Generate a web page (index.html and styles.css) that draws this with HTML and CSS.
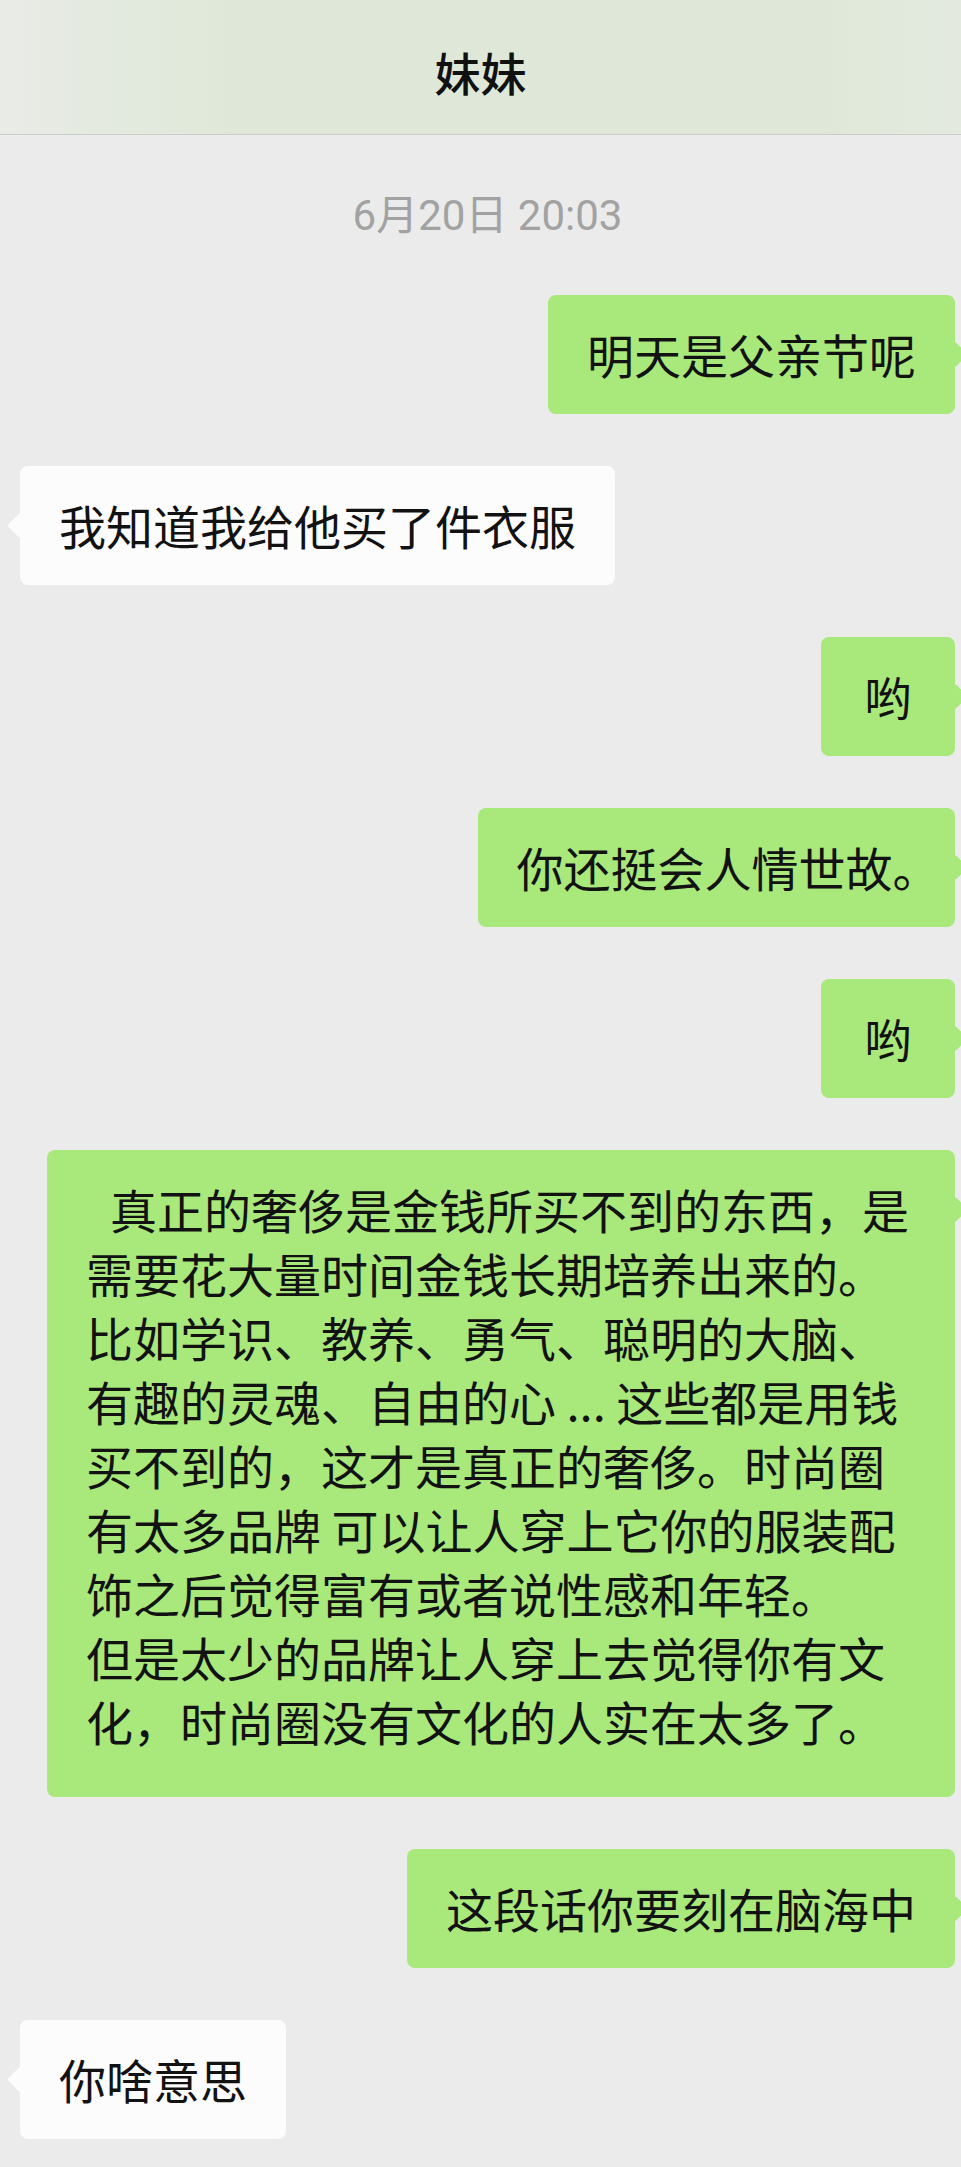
FILE: index.html
```html
<!DOCTYPE html>
<html lang="zh-CN">
<head>
    <meta charset="UTF-8">
    <meta name="viewport" content="width=device-width, initial-scale=1.0">
    <title>妹妹</title>
    <link rel="stylesheet" href="styles.css">
</head>
<body>
    <header class="topbar">
        <h1 class="title">妹妹</h1>
    </header>

    <main class="chat">
        <div class="time">6月20日 20:03</div>

        <div class="msg msg-out">
            <div class="bubble">明天是父亲节呢</div>
        </div>
        <div class="msg msg-in">
            <div class="bubble">我知道我给他买了件衣服</div>
        </div>
        <div class="msg msg-out">
            <div class="bubble">哟</div>
        </div>
        <div class="msg msg-out">
            <div class="bubble">你还挺会人情世故<span class="trim">。</span></div>
        </div>
        <div class="msg msg-out">
            <div class="bubble">哟</div>
        </div>
        <div class="msg msg-out">
            <div class="bubble long">真正的奢侈是金钱所买不到的东西，是<br>需要花大量时间金钱长期培养出来的。<br>比如学识、教养、勇气、聪明的大脑、<br>有趣的灵魂、自由的心 ... 这些都是用钱<br>买不到的，这才是真正的奢侈。时尚圈<br>有太多品牌 可以让人穿上它你的服装配<br>饰之后觉得富有或者说性感和年轻。<br>但是太少的品牌让人穿上去觉得你有文<br>化，时尚圈没有文化的人实在太多了。</div>
        </div>
        <div class="msg msg-out">
            <div class="bubble">这段话你要刻在脑海中</div>
        </div>
        <div class="msg msg-in">
            <div class="bubble">你啥意思</div>
        </div>
    </main>
</body>
</html>
```

FILE: styles.css
```css
html {
    background-color: #ebebeb;
}
body {
    margin: 0;
    overflow-x: hidden;
    font-family: "Noto Sans CJK SC", "Noto Sans", sans-serif;
    color: #121212;
}
.topbar {
    height: 135px;
    box-sizing: border-box;
    padding-top: 8px;
    display: flex;
    align-items: center;
    justify-content: center;
    background: linear-gradient(to right, #e9ebe7 0%, #e4eae0 10%, #dfe8d8 24%, #dfe8d8 86%, #e3e9df 100%);
    border-bottom: 1px solid #cbcdca;
}
.title {
    margin: 0;
    font-size: 46px;
    font-weight: 500;
    line-height: 1;
    color: #111;
}
.chat {
    display: flex;
    flex-direction: column;
    gap: 52px;
    padding: 61px 6px 27px 20px;
}
.time {
    margin-bottom: 7px;
    text-align: center;
    font-family: Roboto, "Noto Sans CJK SC", sans-serif;
    font-size: 42px;
    line-height: 40px;
    color: #a2a2a2;
}
.msg {
    display: flex;
}
.msg-out {
    justify-content: flex-end;
}
.bubble {
    position: relative;
    box-sizing: border-box;
    min-width: 134px;
    max-width: 908px;
    padding: 27px 39px 28px;
    font-size: 47px;
    line-height: 64px;
    text-align: center;
    border-radius: 8px;
}
.bubble::before {
    content: "";
    position: absolute;
    top: 50px;
    width: 19px;
    height: 19px;
    border-radius: 3px;
    transform: rotate(45deg);
    background: inherit;
}
.msg-out .bubble {
    background-color: #a9e87b;
}
.msg-out .bubble::before {
    right: -9px;
}
.msg-in .bubble {
    background-color: #fcfcfc;
}
.msg-in .bubble::before {
    left: -9px;
}
.bubble.long {
    width: 908px;
    padding-bottom: 44px;
    text-align: left;
    text-indent: 24px;
    white-space: nowrap;
}
.trim {
    font-feature-settings: "halt";
}
```
